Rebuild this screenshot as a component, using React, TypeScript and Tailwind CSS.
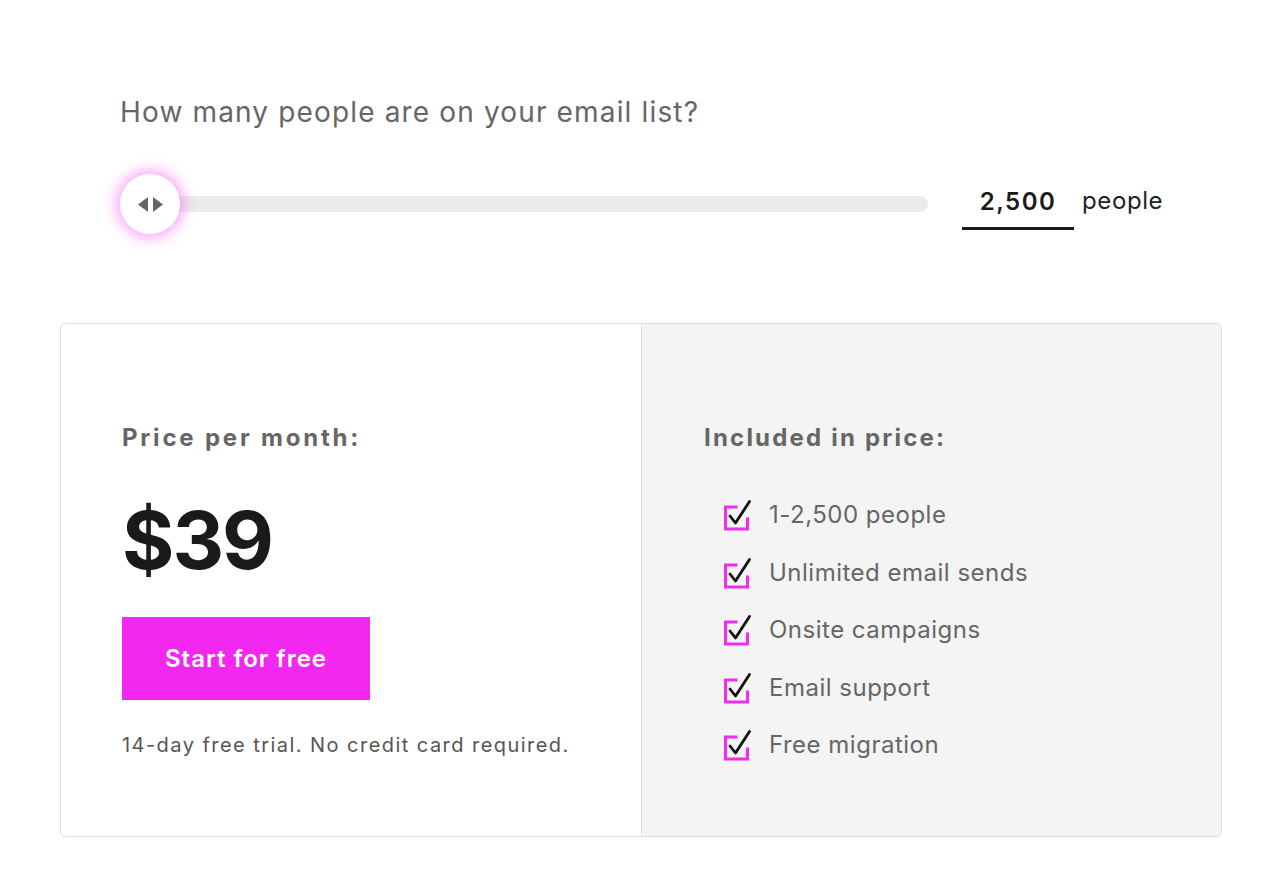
import { useState } from 'react'

const features = [
  '1-2,500 people',
  'Unlimited email sends',
  'Onsite campaigns',
  'Email support',
  'Free migration',
]

function CheckIcon() {
  return (
    <svg width="34" height="34" viewBox="0 0 34 34" fill="none" className="shrink-0">
      <path d="M14 9H3.5V31H25.5V21" stroke="#f02cf0" strokeWidth="3" strokeLinecap="square" />
      <path d="M8 18L13.5 25L27.5 3.5" stroke="#111" strokeWidth="2.8" strokeLinecap="round" strokeLinejoin="round" />
    </svg>
  )
}

export default function App() {
  const [count] = useState('2,500')

  return (
    <div className="min-h-[886px] w-full bg-white" style={{ fontFamily: 'Inter, "Noto Sans", sans-serif' }}>
      <div className="ml-[60px] w-[1162px] pt-[94px]">
        {/* Question + slider */}
        <div className="pl-[60px]">
          <h2 className="text-[28px] leading-[36px] text-[#666] tracking-[1.15px]">
            How many people are on your email list?
          </h2>

          <div className="mt-[44px] flex items-center">
            <div className="relative h-[60px] w-[808px]">
              <div className="absolute left-[29px] right-0 top-[22px] h-[16px] rounded-full bg-[#ebebeb]" />
              <div className="absolute left-0 top-0 flex h-[60px] w-[60px] items-center justify-center gap-[5px] rounded-full bg-white shadow-[0_0_14px_4px_rgba(242,60,240,0.45)]">
                <svg width="10" height="15" viewBox="0 0 10 15">
                  <path d="M10 0V15L0 7.5Z" fill="#666" />
                </svg>
                <svg width="10" height="15" viewBox="0 0 10 15">
                  <path d="M0 0V15L10 7.5Z" fill="#666" />
                </svg>
              </div>
            </div>
            <div className="ml-[34px] flex w-[112px] justify-center border-b-[3px] border-[#1a1a1a] pb-[10px] pt-[8px]">
              <span className="text-[24px] font-semibold leading-[30px] tracking-[1.5px] text-[#1a1a1a]">{count}</span>
            </div>
            <span className="ml-2 -mt-[6px] text-[24px] leading-[30px] tracking-[0.6px] text-[#222]">people</span>
          </div>
        </div>

        {/* Pricing card */}
        <div className="mt-[89px] flex h-[514px] overflow-hidden rounded-[5px] border border-[#dedede]">
          <div className="w-[580px] shrink-0 pl-[61px] pt-[98px]">
            <h3 className="text-[24px] font-bold leading-[32px] tracking-[2.8px] text-[#666]">Price per month:</h3>
            <div className="mt-[41px] text-[80px] font-bold leading-[90px] tracking-[-2px] text-[#1a1a1a]">$39</div>
            <button className="mt-[32px] flex h-[83px] w-[248px] items-center justify-center bg-[#f227f0] text-[24px] font-semibold tracking-[1px] text-white">
              Start for free
            </button>
            <p className="mt-[31px] text-[20px] leading-[28px] tracking-[1.45px] text-[#555]">
              14-day free trial. No credit card required.
            </p>
          </div>
          <div className="flex-1 border-l border-[#dedede] bg-[#f4f4f4] pl-[62px] pt-[98px]">
            <h3 className="text-[24px] font-bold leading-[32px] tracking-[2.2px] text-[#666]">Included in price:</h3>
            <ul className="mt-[45px] flex flex-col gap-[25.5px] pl-[18px]">
              {features.map((f) => (
                <li key={f} className="flex h-[32px] items-center gap-[13px]">
                  <CheckIcon />
                  <span className="text-[24px] leading-[32px] tracking-[0.5px] text-[#666]">{f}</span>
                </li>
              ))}
            </ul>
          </div>
        </div>
      </div>
    </div>
  )
}
